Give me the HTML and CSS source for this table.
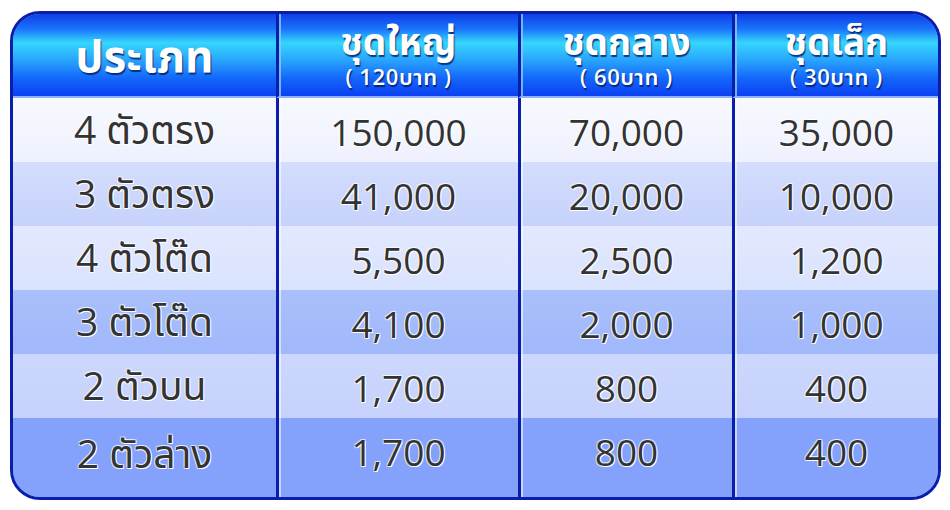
FILE: index.html
```html
<!DOCTYPE html>
<html lang="th">
<head>
<meta charset="utf-8">
<link rel="stylesheet" href="styles.css">
</head>
<body>
<div class="board">
  <div class="grid">
    <div class="hd c1"><span class="hmain big">ประเภท</span></div>
    <div class="hd"><span class="hmain">ชุดใหญ่</span><span class="hsub">( 120บาท )</span></div>
    <div class="hd"><span class="hmain">ชุดกลาง</span><span class="hsub">( 60บาท )</span></div>
    <div class="hd"><span class="hmain">ชุดเล็ก</span><span class="hsub">( 30บาท )</span></div>

    <div class="cell r1 c1">4 ตัวตรง</div>
    <div class="cell r1">150,000</div>
    <div class="cell r1">70,000</div>
    <div class="cell r1">35,000</div>

    <div class="cell r2 c1">3 ตัวตรง</div>
    <div class="cell r2">41,000</div>
    <div class="cell r2">20,000</div>
    <div class="cell r2">10,000</div>

    <div class="cell r3 c1">4 ตัวโต๊ด</div>
    <div class="cell r3">5,500</div>
    <div class="cell r3">2,500</div>
    <div class="cell r3">1,200</div>

    <div class="cell r4 c1">3 ตัวโต๊ด</div>
    <div class="cell r4">4,100</div>
    <div class="cell r4">2,000</div>
    <div class="cell r4">1,000</div>

    <div class="cell r5 c1">2 ตัวบน</div>
    <div class="cell r5">1,700</div>
    <div class="cell r5">800</div>
    <div class="cell r5">400</div>

    <div class="cell r6 c1">2 ตัวล่าง</div>
    <div class="cell r6">1,700</div>
    <div class="cell r6">800</div>
    <div class="cell r6">400</div>
  </div>
</div>
</body>
</html>
```
FILE: styles.css
```css
* { box-sizing: border-box; }
html, body { margin: 0; padding: 0; background: #ffffff; }
body {
  width: 950px;
  height: 510px;
  padding: 11px 0 0 10px;
  font-family: "Open Sans", "Noto Sans", "Noto Sans Thai", "Noto Sans Thai UI", sans-serif;
}
.board {
  width: 931px;
  height: 489px;
  border: 3px solid #0a1eac;
  border-radius: 30px;
  overflow: hidden;
  background: #84a2fc;
}
.grid {
  display: grid;
  grid-template-columns: 263px 242px 214px 206px;
  grid-template-rows: 84px 64px 64px 64px 64px 64px 1fr;
  height: 100%;
}
.hd, .cell {
  border-left: 3px solid #0a1eac;
  box-shadow: inset 2px 0 0 rgba(255, 255, 255, 0.55);
}
.c1 { border-left: none; box-shadow: none; }
.hd {
  display: flex;
  flex-direction: column;
  align-items: center;
  justify-content: center;
  color: #ffffff;
  background: linear-gradient(to bottom, #0d3fe6 0%, #1a72fb 18%, #35d6fd 35%, #2aa8fd 55%, #1468fb 78%, #0b40f2 100%);
  border-bottom: 2px solid #8fb0ff;
  text-shadow: 1px 2px 1px rgba(0, 20, 90, 0.75);
}
.hd.c1 { box-shadow: none; }
.hd + .hd { box-shadow: inset 2px 0 0 rgba(140, 200, 255, 0.8); }
.hmain {
  font-size: 37px;
  font-weight: 700;
  line-height: 38px;
}
.hmain.big { font-size: 44px; line-height: 50px; }
.hsub {
  font-size: 22px;
  font-weight: 600;
  line-height: 24px;
  padding-top: 4px;
  letter-spacing: 0.6px;
}
.cell {
  display: flex;
  align-items: center;
  justify-content: center;
  font-size: 37px;
  color: #333333;
  padding-top: 3px;
  text-shadow: 1px 1px 0 #ffffff, -1px -1px 0 rgba(255,255,255,0.6), 1px -1px 0 rgba(255,255,255,0.6), -1px 1px 0 rgba(255,255,255,0.6);
}
.cell.c1 { font-size: 39px; font-weight: 400; }
.r1 { background: linear-gradient(to bottom, #f8f9ff, #eef1fe); }
.r2 { background: linear-gradient(to bottom, #d4ddfd, #c6d2fb); }
.r3 { background: linear-gradient(to bottom, #e2e8fe, #dae3fe); }
.r4 { background: linear-gradient(to bottom, #aac0fb, #a0b7fb); }
.r5 { background: linear-gradient(to bottom, #ccd7fd, #c6d2fc); }
.r6 {
  background: #84a2fc;
  align-items: flex-start;
  padding-top: 8px;
}
```
